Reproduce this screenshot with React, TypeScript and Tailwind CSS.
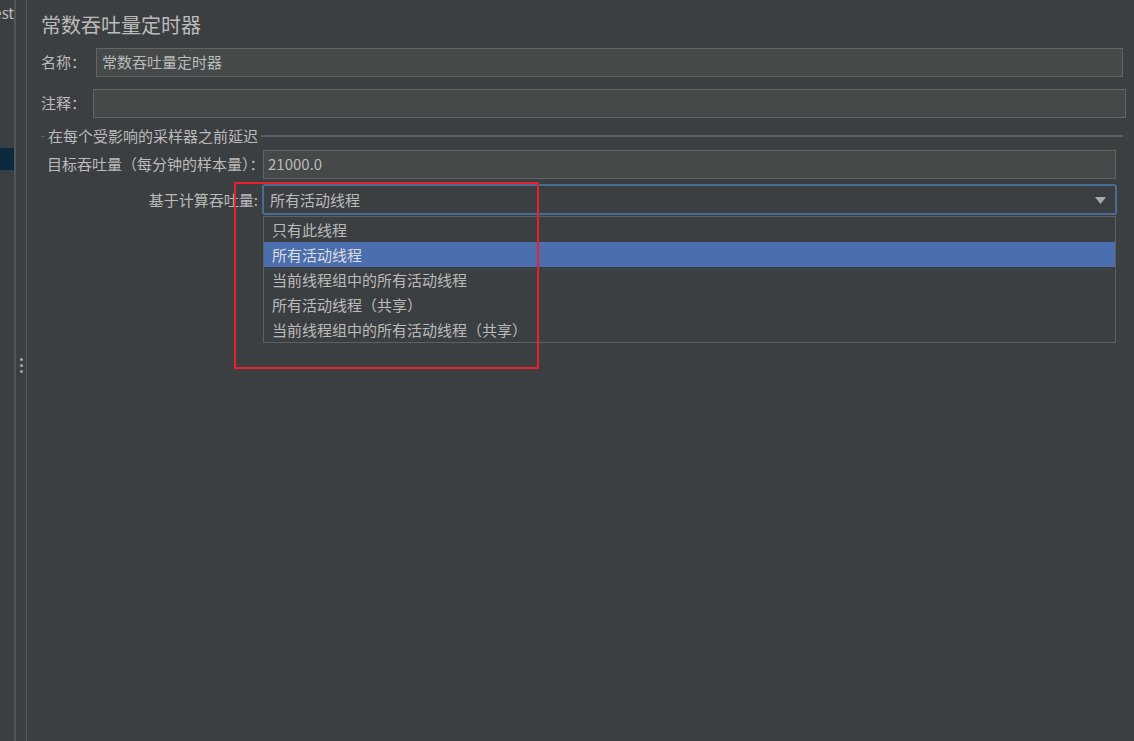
import React from 'react';

const FONT = { fontFamily: '"Noto Sans CJK SC", "Noto Sans", sans-serif' };

const options = [
  '只有此线程',
  '所有活动线程',
  '当前线程组中的所有活动线程',
  '所有活动线程（共享）',
  '当前线程组中的所有活动线程（共享）',
];

export default function App() {
  return (
    <div className="relative flex h-[741px] w-[1134px] overflow-hidden bg-[#3c3f41] text-[15px] text-[#bbbbbb]" style={FONT}>
      {/* Left tree strip */}
      <div className="flex w-[14px] flex-col overflow-hidden">
        <div className="mt-[3px] flex h-[20px] justify-end whitespace-nowrap leading-[20px]">Test</div>
        <div className="mt-[125px] h-[22px] bg-[#0d293e]" />
      </div>
      <div className="w-[2px] bg-[#515658]" />

      {/* Splitter */}
      <div className="flex w-[10px] flex-col items-center justify-center gap-[3px] pb-[10px]">
        <div className="h-[3px] w-[3px] rounded-full bg-[#a9a9a9]" />
        <div className="h-[3px] w-[3px] rounded-full bg-[#a9a9a9]" />
        <div className="h-[3px] w-[3px] rounded-full bg-[#a9a9a9]" />
      </div>
      <div className="w-[1px] bg-[#515658]" />

      {/* Main panel */}
      <div className="flex flex-1 flex-col pl-[14px] pr-[8px]">
        <div className="mt-[12px] text-[20px] leading-[26px]">常数吞吐量定时器</div>

        {/* 名称 */}
        <div className="mt-[10px] mr-[3px] flex h-[29px] items-center">
          <div className="w-[55px]">名称：</div>
          <div className="flex h-full flex-1 items-center border border-[#646464] bg-[#45494a] pl-[5px]">常数吞吐量定时器</div>
        </div>

        {/* 注释 */}
        <div className="mt-[12px] flex h-[29px] items-center">
          <div className="w-[52px]">注释：</div>
          <div className="h-full flex-1 border border-[#646464] bg-[#45494a]" />
        </div>

        {/* Group */}
        <div className="mt-[8px] mr-[3px] flex h-[20px] items-center">
          <div className="h-[1px] w-[4px] bg-[#5e6060]" />
          <div className="px-[3px] leading-[20px]">在每个受影响的采样器之前延迟</div>
          <div className="h-[2px] flex-1 bg-[#5e6060]" />
        </div>

        <div className="mt-[4px] ml-[6px] mr-[10px] flex h-[29px] items-center">
          <div className="w-[216px] whitespace-nowrap">目标吞吐量（每分钟的样本量）：</div>
          <div className="flex h-full flex-1 items-center border border-[#646464] bg-[#45494a] pl-[4px]">21000.0</div>
        </div>

        <div className="relative mt-[5px] ml-[6px] mr-[9px] flex h-[31px] items-center">
          <div className="w-[215px] pr-[4px] pt-[2px] text-right">基于计算吞吐量:</div>
          <div className="flex h-full flex-1 items-center justify-between rounded-[3px] border-2 border-[#466d94] bg-[#3c3f41] pl-[6px] pr-[9px] pt-[2px]">
            <span>所有活动线程</span>
            <svg width="11" height="7" viewBox="0 0 11 7">
              <path d="M0 0 L11 0 L5.5 7 Z" fill="#a9a9a9" />
            </svg>
          </div>

          {/* Dropdown popup */}
          <div className="absolute left-[216px] right-[1px] top-[32px] z-10 flex flex-col border border-[#5e6060] bg-[#3c3f41]">
            {options.map((o, i) => (
              <div
                key={o}
                className={
                  'h-[25px] pl-[8px] leading-[25px] ' + (i === 1 ? 'bg-[#4b6eaf] text-[#dddddd]' : '')
                }
              >
                {o}
              </div>
            ))}
          </div>
        </div>
      </div>

      {/* Red annotation box */}
      <div className="pointer-events-none absolute left-[234px] top-[182px] z-20 h-[187px] w-[305px] border-2 border-[#e8202a]" />
    </div>
  );
}
